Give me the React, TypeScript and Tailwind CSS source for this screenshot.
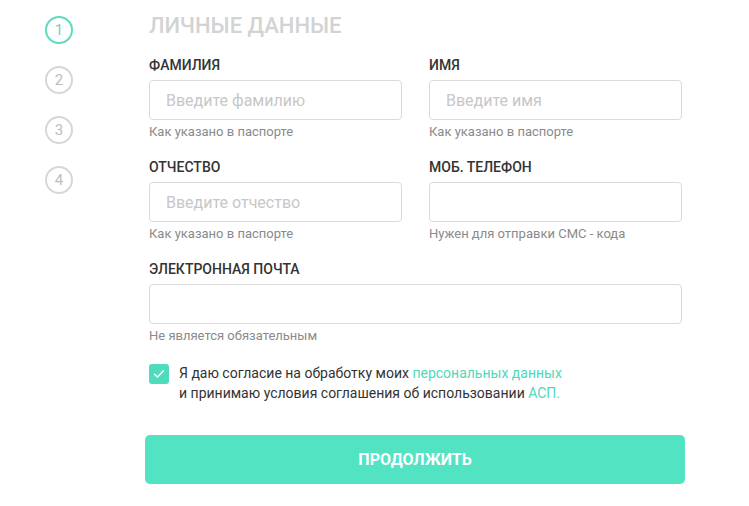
import React from 'react';

const steps = [1, 2, 3, 4];

const Field = ({
  label,
  placeholder,
  hint,
  wide,
}: {
  label: string;
  placeholder?: string;
  hint: string;
  wide?: boolean;
}) => (
  <div className={wide ? 'col-span-2 flex flex-col' : 'flex flex-col'}>
    <label className="text-[14px] leading-[20px] font-medium text-[#333333] uppercase">{label}</label>
    <input
      type="text"
      placeholder={placeholder}
      className="mt-[5px] h-[40px] w-full rounded-[4px] border border-[#dadada] bg-white px-4 text-[16px] text-[#333] outline-none placeholder:text-[#c7c7c7]"
    />
    <span className="mt-[3px] text-[13px] leading-[18px] text-[#8a8a8a]">{hint}</span>
  </div>
);

export default function App() {
  return (
    <div className="min-h-screen bg-white font-['Roboto',sans-serif]">
      <div className="flex pl-[45px]">
        {/* Stepper */}
        <div className="flex flex-col gap-[22px] pt-[16px]">
          {steps.map((n) => (
            <div
              key={n}
              className={
                n === 1
                  ? 'flex h-[28px] w-[28px] items-center justify-center rounded-full border-2 border-[#5fd9c0] text-[15px] text-[#5fd9c0]'
                  : 'flex h-[28px] w-[28px] items-center justify-center rounded-full border-2 border-[#d7d7d7] text-[15px] text-[#bdbdbd]'
              }
            >
              {n}
            </div>
          ))}
        </div>

        {/* Form */}
        <div className="ml-[76px] w-[533px] pt-[12px]">
          <h1 className="text-[22px] leading-[28px] font-medium text-[#d3d3d3]">ЛИЧНЫЕ ДАННЫЕ</h1>

          <div className="mt-[15px] grid grid-cols-2 gap-x-[27px] gap-y-[16px]">
            <Field label="Фамилия" placeholder="Введите фамилию" hint="Как указано в паспорте" />
            <Field label="Имя" placeholder="Введите имя" hint="Как указано в паспорте" />
            <Field label="Отчество" placeholder="Введите отчество" hint="Как указано в паспорте" />
            <Field label="Моб. телефон" hint="Нужен для отправки СМС - кода" />
            <Field label="Электронная почта" hint="Не является обязательным" wide />
          </div>

          <div className="mt-[18px] flex items-start">
            <span className="mt-[1px] flex h-[20px] w-[20px] shrink-0 items-center justify-center rounded-[3px] bg-[#4fdcbc]">
              <svg width="12" height="10" viewBox="0 0 12 10" fill="none">
                <path d="M1.5 5.2 L4.5 8 L10.5 1.8" stroke="white" strokeWidth="1.4" strokeLinecap="round" strokeLinejoin="round" />
              </svg>
            </span>
            <p className="ml-[10px] text-[14px] leading-[20px] text-[#333333]">
              Я даю согласие на обработку моих <a className="text-[#4fd8b9]">персональных данных</a>
              <br />
              и принимаю условия соглашения об использовании <a className="text-[#4fd8b9]">АСП.</a>
            </p>
          </div>

          <button className="-mx-[4px] mt-[32px] flex h-[49px] w-[540px] items-center justify-center rounded-[5px] bg-[#52e3c3] text-[16px] font-bold text-white">
            ПРОДОЛЖИТЬ
          </button>
        </div>
      </div>
    </div>
  );
}
